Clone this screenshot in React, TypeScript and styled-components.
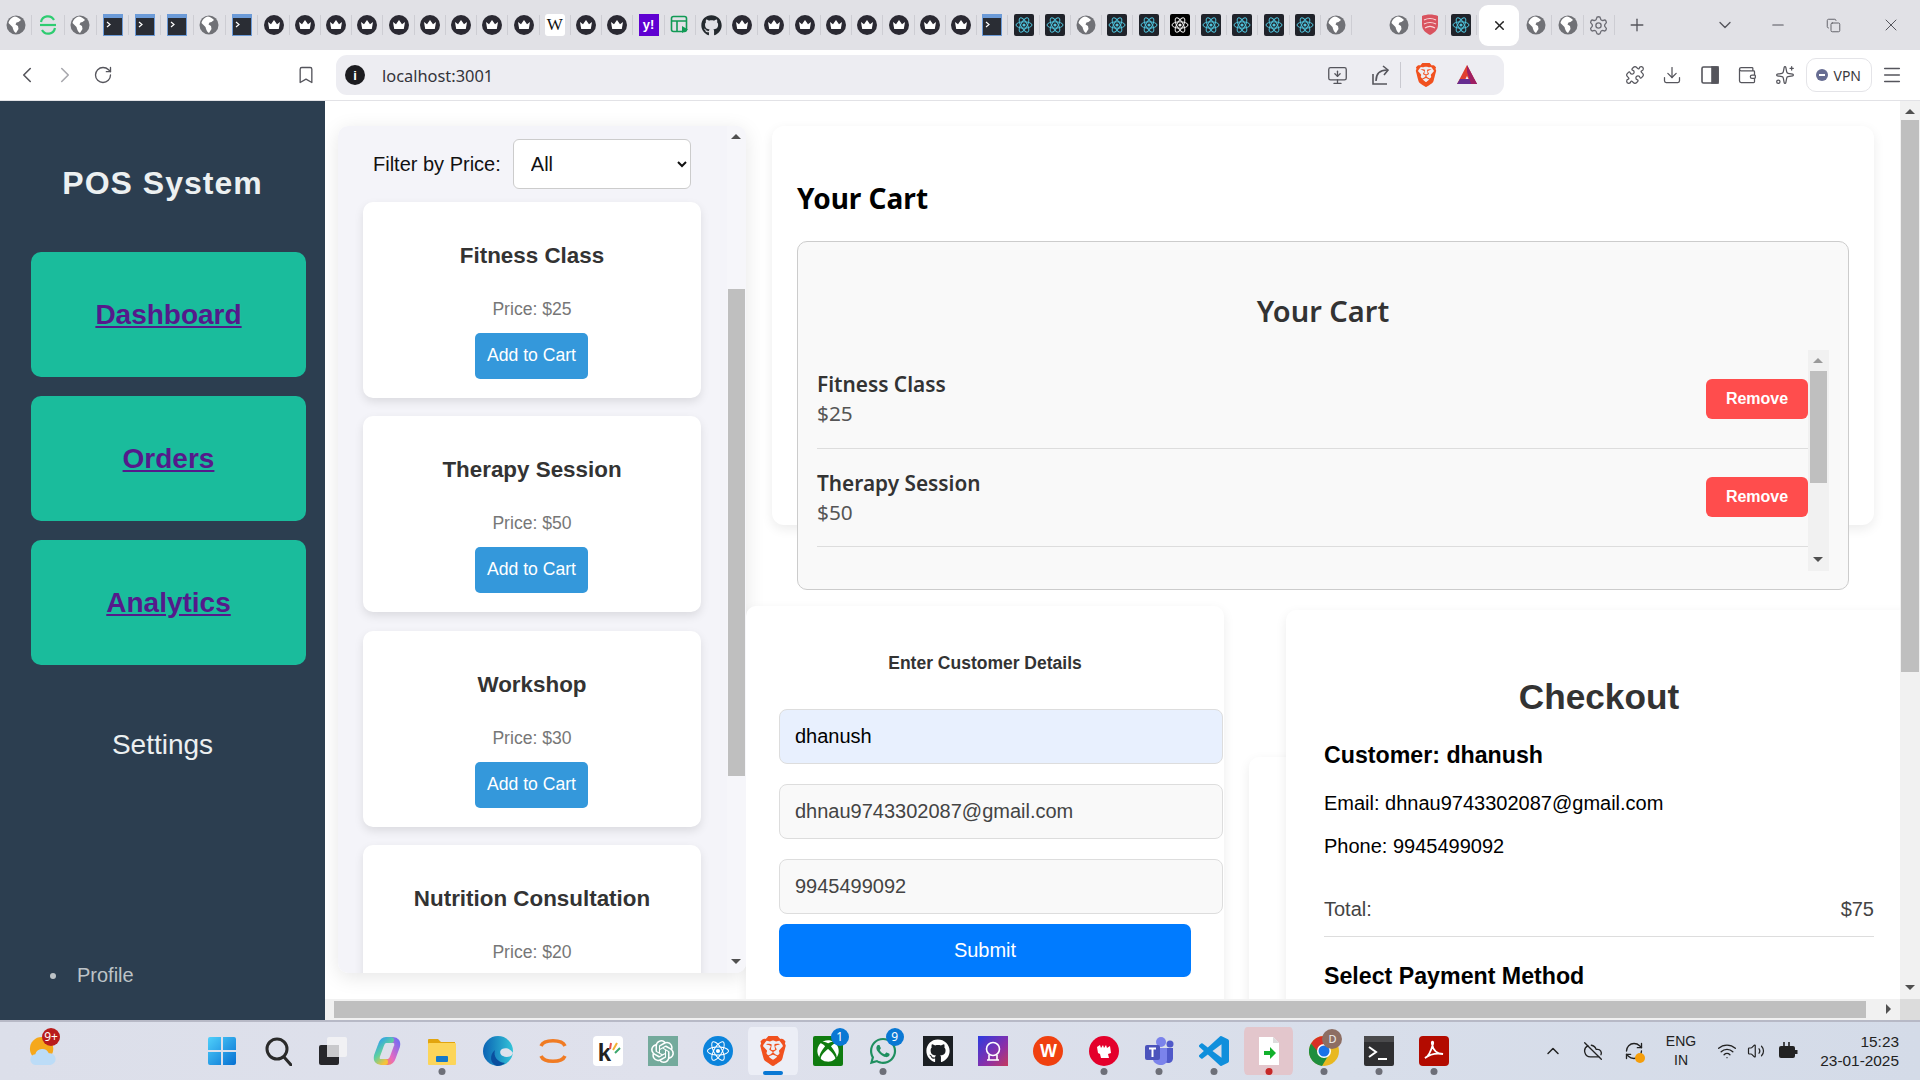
import React from "react";
import styled, { createGlobalStyle } from "styled-components";
import {
  Bookmark,
  ChevronDown,
  ChevronLeft,
  ChevronRight,
  ChevronUp,
  CloudOff,
  Copy,
  Download,
  Menu,
  Minus,
  MonitorDown,
  Plus,
  Puzzle,
  RefreshCw,
  RotateCw,
  Settings,
  Sparkles,
  Volume2,
  Wallet,
  Wifi,
  X,
} from "lucide-react";
import { FaGithub, FaWhatsapp, FaXbox } from "react-icons/fa";
import { SiBrave, SiOpenai, SiReact } from "react-icons/si";

const GlobalStyle = createGlobalStyle`
  html, body {
    margin: 0;
    padding: 0;
    overflow: hidden;
    background: #fff;
  }
  * {
    font-family: "Liberation Sans", Arial, sans-serif;
  }
`;

const Frame = styled.div`
  width: 1920px;
  height: 1080px;
  display: flex;
  flex-direction: column;
  overflow: hidden;
`;

/* ---------- browser tab strip ---------- */

const TabBar = styled.div`
  height: 50px;
  flex-shrink: 0;
  background: #e1e1e6;
  display: flex;
  align-items: center;
`;

const TabSlot = styled.div<{ $bare?: boolean; $wide?: boolean }>`
  width: ${(p) => (p.$wide ? 32.3 : 31.25)}px;
  height: 20px;
  flex-shrink: 0;
  display: flex;
  align-items: center;
  justify-content: center;
  box-sizing: border-box;
  border-right: 1px solid ${(p) => (p.$bare ? "transparent" : "#cdcdd3")};
`;

const ActiveTab = styled.div`
  width: 40px;
  height: 41px;
  margin: 0 2px 0 2px;
  flex-shrink: 0;
  background: #fff;
  border-radius: 9px;
  display: flex;
  align-items: center;
  justify-content: center;
  color: #222;
`;

const TabPlus = styled.div`
  width: 45px;
  flex-shrink: 0;
  display: flex;
  justify-content: center;
  color: #55555c;
`;

const WindowControls = styled.div`
  margin-left: 39px;
  flex-shrink: 0;
  display: flex;
  align-items: center;
  color: #55555c;
`;

const WindowButton = styled.div<{ $w: number }>`
  width: ${(p) => p.$w}px;
  display: flex;
  justify-content: center;
`;

/* ---------- browser toolbar ---------- */

const Toolbar = styled.div`
  height: 50px;
  flex-shrink: 0;
  background: #fff;
  border-bottom: 1px solid #e2e2e6;
  display: flex;
  align-items: center;
  padding-left: 8px;
  color: #55555c;
`;

const ToolSlot = styled.div<{ $w?: number; $dim?: boolean }>`
  width: ${(p) => p.$w ?? 38}px;
  flex-shrink: 0;
  display: flex;
  justify-content: center;
  align-items: center;
  color: ${(p) => (p.$dim ? "#a8a8ae" : "inherit")};
`;

const BookmarkSlot = styled(ToolSlot)`
  margin-left: 164px;
`;

const UrlBar = styled.div`
  width: 1168px;
  height: 40px;
  margin-left: 10px;
  flex-shrink: 0;
  background: #ededf2;
  border-radius: 11px;
  display: flex;
  align-items: center;
  padding-left: 9px;
  padding-right: 16px;
  box-sizing: border-box;
`;

const InfoDot = styled.div`
  width: 20px;
  height: 20px;
  border-radius: 50%;
  background: #1c1c20;
  color: #fff;
  font-size: 13px;
  font-weight: bold;
  display: flex;
  align-items: center;
  justify-content: center;
  flex-shrink: 0;
`;

const UrlText = styled.span`
  margin-left: 17px;
  font-family: "Noto Sans", sans-serif;
  font-size: 16.4px;
  color: #34343a;
`;

const UrlActions = styled.div`
  margin-left: auto;
  display: flex;
  align-items: center;
  color: #55555c;
`;

const UrlDivider = styled.div`
  width: 1px;
  height: 26px;
  background: #c9c9d0;
  margin: 0 5px 0 0;
`;

const RightTools = styled.div`
  display: flex;
  align-items: center;
  margin-left: 112px;
`;

const VpnPill = styled.div`
  width: 66px;
  height: 34px;
  margin-left: 2px;
  box-sizing: border-box;
  border: 1px solid #e4e4e8;
  border-radius: 10px;
  display: flex;
  align-items: center;
  padding-left: 9px;
  gap: 6px;
  font-family: "Noto Sans", sans-serif;
  font-size: 14px;
  color: #3a3a40;
`;

const VpnDot = styled.div`
  width: 12px;
  height: 12px;
  border-radius: 50%;
  background: #676d92;
  display: flex;
  align-items: center;
  justify-content: center;
  &::after {
    content: "";
    width: 6px;
    height: 2px;
    background: #fff;
  }
`;

/* ---------- page ---------- */

const Viewport = styled.div`
  flex: 1;
  min-height: 0;
  display: flex;
`;

const Sidebar = styled.aside`
  width: 325px;
  flex-shrink: 0;
  background: #2c3e50;
  color: #ecf0f1;
  display: flex;
  flex-direction: column;
  box-sizing: border-box;
`;

const Brand = styled.h2`
  margin: 64px 0 50px;
  font-size: 32px;
  line-height: 37px;
  font-weight: bold;
  letter-spacing: 1px;
  text-align: center;
  color: #ecf0f1;
`;

const NavList = styled.nav`
  display: flex;
  flex-direction: column;
  gap: 19px;
  padding-left: 31px;
`;

const NavCard = styled.a`
  width: 275px;
  height: 125px;
  background: #1abc9c;
  border-radius: 10px;
  display: flex;
  align-items: center;
  justify-content: center;
  font-size: 28px;
  font-weight: bold;
  color: #551a8b;
  text-decoration: underline;
`;

const PlainNav = styled.div`
  margin-top: 64px;
  font-size: 28px;
  line-height: 32px;
  text-align: center;
  color: #ecf0f1;
`;

const ProfileList = styled.ul`
  margin: auto 0 33px;
  padding-left: 50px;
  list-style: none;
  font-size: 20px;
  line-height: 23px;
  color: #bdc3c7;
`;

const ProfileItem = styled.li`
  display: flex;
  align-items: center;
  &::before {
    content: "";
    width: 6px;
    height: 6px;
    margin-right: 21px;
    border-radius: 50%;
    background: #bdc3c7;
  }
`;

const Workspace = styled.main`
  flex: 1;
  min-width: 0;
  position: relative;
  overflow: hidden;
  background: #fff;
`;

const ScrollPane = styled.div`
  height: 898px;
  overflow: hidden;
  display: flex;
  align-items: flex-start;
  padding: 25px 0 0 13px;
  box-sizing: border-box;
`;

/* scrollbars lie over the panes */
const Track = styled.div<{ $dir: "v" | "h" }>`
  position: absolute;
  background: #f1f1f1;
  ${(p) =>
    p.$dir === "v"
      ? "top: 0; right: 0; bottom: 0; width: 20px;"
      : "left: 0; right: 0; bottom: 0; height: 21px;"}
`;

const Thumb = styled.div<{ $a: number; $b: number; $dir: "v" | "h"; $edge: number }>`
  position: absolute;
  background: #bfbfbf;
  ${(p) =>
    p.$dir === "v"
      ? `top: ${p.$a}px; height: ${p.$b}px; left: ${p.$edge}px; right: ${p.$edge}px;`
      : `left: ${p.$a}px; width: ${p.$b}px; top: ${p.$edge}px; bottom: ${p.$edge}px;`}
`;

const Arrow = styled.div<{ $dir: "up" | "down" | "right"; $x: number; $y: number; $dim?: boolean }>`
  position: absolute;
  left: ${(p) => p.$x}px;
  top: ${(p) => p.$y}px;
  width: 0;
  height: 0;
  ${(p) => {
    const c = p.$dim ? "#9a9a9a" : "#505050";
    if (p.$dir === "up")
      return `border-left: 5px solid transparent; border-right: 5px solid transparent; border-bottom: 5px solid ${c};`;
    if (p.$dir === "down")
      return `border-left: 5px solid transparent; border-right: 5px solid transparent; border-top: 5px solid ${c};`;
    return `border-top: 5px solid transparent; border-bottom: 5px solid transparent; border-left: 5px solid ${c};`;
  }}
`;

const Corner = styled.div`
  position: absolute;
  right: 0;
  bottom: 0;
  width: 20px;
  height: 21px;
  background: #dcdcdc;
`;

/* ---------- product list ---------- */

const ProductPanel = styled.section`
  width: 408px;
  height: 847px;
  flex-shrink: 0;
  position: relative;
  overflow: hidden;
  background: #f4f4f9;
  border-radius: 10px;
  box-sizing: border-box;
  padding: 13px 0 0 25px;
`;

const ProductShadow = styled.div`
  flex-shrink: 0;
  border-radius: 10px;
  box-shadow: 0 4px 20px rgba(0, 0, 0, 0.1);
  height: 847px;
`;

const FilterRow = styled.div`
  display: flex;
  align-items: center;
  gap: 12px;
  padding-left: 10px;
  margin-bottom: 13px;
  font-size: 20px;
  color: #111;
`;

const FilterSelect = styled.select`
  width: 178px;
  height: 50px;
  padding: 0 13px;
  font-size: 20px;
  color: #111;
  background: #fff;
  border: 1px solid #ccc;
  border-radius: 6px;
`;

const ProductCard = styled.article`
  width: 338px;
  height: 196px;
  flex-shrink: 0;
  margin-bottom: 18.33px;
  padding: 41px 0 0;
  box-sizing: border-box;
  background: #fff;
  border-radius: 10px;
  box-shadow: 0 4px 10px rgba(0, 0, 0, 0.1);
  display: flex;
  flex-direction: column;
  align-items: center;
`;

const ProductName = styled.h3`
  margin: 0 0 30px;
  font-size: 22.4px;
  line-height: 26px;
  font-weight: bold;
  color: #333;
`;

const ProductPrice = styled.p`
  margin: 0 0 14px;
  font-size: 17.6px;
  line-height: 20px;
  color: #777;
`;

const AddButton = styled.button`
  width: 113px;
  height: 46px;
  margin-right: 1px;
  padding: 0 0 1px;
  border: none;
  border-radius: 5px;
  background: #3498db;
  color: #fff;
  font-size: 17.6px;
`;

const PanelScrollbar = styled.div`
  position: absolute;
  top: 0;
  right: 0;
  bottom: 0;
  width: 19px;
  background: #f6f6fa;
`;

/* ---------- cart ---------- */

const RightColumn = styled.div`
  display: flex;
  flex-direction: column;
  flex-shrink: 0;
`;

const CartPanel = styled.section`
  width: 1102px;
  height: 399px;
  margin-left: 26px;
  padding: 57px 25px 0;
  box-sizing: border-box;
  background: #fff;
  border-radius: 12px;
  box-shadow: 0 4px 12px rgba(0, 0, 0, 0.08);
`;

const CartHeading = styled.h2`
  margin: 0 0 28px;
  font-family: "Noto Sans", sans-serif;
  font-size: 28px;
  line-height: 30px;
  font-weight: 700;
  color: #000;
`;

const CartBox = styled.div`
  width: 1052px;
  height: 349px;
  box-sizing: border-box;
  padding: 0 19px 0 19px;
  background: #f9f9f9;
  border: 1px solid #ccc;
  border-radius: 10px;
  position: relative;
  z-index: 1;
`;

const CartBoxTitle = styled.h2`
  margin: 0;
  height: 108px;
  box-sizing: border-box;
  padding-top: 54px;
  text-align: center;
  font-family: "Noto Sans", sans-serif;
  font-size: 29px;
  line-height: 30px;
  font-weight: 600;
  color: #333;
`;

const CartList = styled.div`
  position: relative;
  height: 221px;
  padding-right: 21px;
`;

const CartRow = styled.div`
  height: 98.5px;
  box-sizing: border-box;
  border-bottom: 1px solid #ddd;
  display: flex;
  align-items: center;
  justify-content: space-between;
`;

const CartInfo = styled.div`
  display: flex;
  flex-direction: column;
  padding-top: 1px;
`;

const CartName = styled.span`
  font-family: "Noto Sans", sans-serif;
  font-size: 20.8px;
  line-height: 29px;
  font-weight: 600;
  color: #333;
`;

const CartPrice = styled.span`
  font-family: "Noto Sans", sans-serif;
  font-size: 20.8px;
  line-height: 29px;
  color: #555;
`;

const RemoveButton = styled.button`
  width: 102px;
  height: 40px;
  padding: 0;
  border: none;
  border-radius: 6px;
  background: #ff4d4d;
  color: #fff;
  font-size: 16px;
  font-weight: bold;
`;

const ListScrollbar = styled.div`
  position: absolute;
  top: 0;
  right: 0;
  width: 21px;
  height: 221px;
  background: #f1f1f1;
`;

/* ---------- form + checkout ---------- */

const LowerRow = styled.div`
  display: flex;
  align-items: flex-start;
  margin-top: 81px;
`;

const FormPanel = styled.section`
  width: 478px;
  height: 500px;
  flex-shrink: 0;
  padding: 47px 33px 0;
  box-sizing: border-box;
  background: #fff;
  border-radius: 10px;
  box-shadow: 0 4px 12px rgba(0, 0, 0, 0.08);
  display: flex;
  flex-direction: column;
`;

const FormTitle = styled.h4`
  margin: 0 0 36px;
  font-size: 17.5px;
  line-height: 20px;
  font-weight: bold;
  text-align: center;
  color: #333;
`;

const Field = styled.input<{ $filled?: boolean }>`
  width: 412px;
  height: 23px;
  flex-shrink: 0;
  box-sizing: content-box;
  padding: 15px;
  margin-bottom: 20px;
  border: 1px solid #ddd;
  border-radius: 8px;
  font-size: 20px;
  outline: none;
  color: ${(p) => (p.$filled ? "#000" : "#444")};
  background: ${(p) => (p.$filled ? "#e8f0fe" : "#f9f9f9")};
  &:last-of-type {
    margin-bottom: 10px;
  }
`;

const SubmitButton = styled.button`
  width: 412px;
  height: 53px;
  flex-shrink: 0;
  border: none;
  border-radius: 7px;
  background: #007bff;
  color: #fff;
  font-size: 20px;
`;

const BackPanel = styled.div`
  width: 120px;
  height: 300px;
  flex-shrink: 0;
  margin: 151px -83px 0 25px;
  background: #fff;
  border-radius: 10px;
  box-shadow: 0 4px 12px rgba(0, 0, 0, 0.08);
`;

const CheckoutPanel = styled.section`
  position: relative;
  width: 626px;
  height: 500px;
  flex-shrink: 0;
  margin-top: 4px;
  padding: 67px 38px 0;
  box-sizing: border-box;
  background: #fff;
  border-radius: 10px;
  box-shadow: 0 4px 12px rgba(0, 0, 0, 0.08);
`;

const CheckoutTitle = styled.h2`
  margin: 0 0 25px;
  font-size: 35.2px;
  line-height: 40px;
  font-weight: bold;
  text-align: center;
  color: #333;
`;

const CheckoutHeading = styled.h3`
  margin: 0;
  font-size: 23.2px;
  line-height: 27px;
  font-weight: bold;
  color: #000;
`;

const CheckoutLine = styled.p`
  margin: 20px 0 0;
  font-size: 20px;
  line-height: 23px;
  color: #000;
  &:first-of-type {
    margin-top: 23px;
  }
`;

const TotalRow = styled.div`
  width: 550px;
  margin-top: 40px;
  padding-bottom: 15px;
  margin-bottom: 26px;
  border-bottom: 1px solid #ddd;
  display: flex;
  justify-content: space-between;
  font-size: 20px;
  line-height: 23px;
  color: #444;
`;

/* ---------- windows taskbar ---------- */

const Taskbar = styled.footer`
  height: 60px;
  flex-shrink: 0;
  box-sizing: border-box;
  border-top: 2px solid #b7b9c6;
  background: linear-gradient(90deg, #dcdfea, #dfe1ec 35%, #d8deea 70%, #d4dbe8);
  display: flex;
  align-items: center;
`;

const TaskSlot = styled.div<{ $w?: number; $dot?: string; $bar?: boolean; $hl?: string }>`
  position: relative;
  width: ${(p) => p.$w ?? 55.1}px;
  height: 48px;
  flex-shrink: 0;
  display: flex;
  align-items: center;
  justify-content: center;
  box-sizing: border-box;
  padding: 0 ${(p) => (p.$hl ? 3 : 0)}px;
  background: ${(p) => p.$hl ?? "transparent"};
  background-clip: content-box;
  border-radius: 6px;
  &::after {
    content: "";
    display: ${(p) => (p.$dot || p.$bar ? "block" : "none")};
    position: absolute;
    bottom: 0px;
    left: 50%;
    transform: translateX(-50%);
    width: ${(p) => (p.$bar ? 20 : 7)}px;
    height: ${(p) => (p.$bar ? 4 : 7)}px;
    border-radius: 4px;
    background: ${(p) => (p.$bar ? "#0a78d4" : p.$dot)};
  }
`;

const TaskGroup = styled.div`
  display: flex;
  align-items: center;
  margin-left: 110.5px;
`;

const TaskBadge = styled.span<{ $bg: string; $right?: number }>`
  position: absolute;
  top: 1px;
  right: ${(p) => p.$right ?? 7}px;
  min-width: 18px;
  height: 18px;
  padding: 0 2px;
  box-sizing: border-box;
  border-radius: 9px;
  background: ${(p) => p.$bg};
  color: #fff;
  font-family: "Noto Sans", sans-serif;
  font-size: 12px;
  line-height: 18px;
  text-align: center;
`;

const SyncDot = styled.span`
  position: absolute;
  right: 10px;
  bottom: 12px;
  width: 10px;
  height: 10px;
  border-radius: 50%;
  background: #f59e0b;
`;

const Tray = styled.div`
  margin-left: auto;
  padding-right: 21px;
  display: flex;
  align-items: center;
  color: #222;
`;

const TrayText = styled.div<{ $w: number; $align: string; $size: number }>`
  width: ${(p) => p.$w}px;
  flex-shrink: 0;
  display: flex;
  flex-direction: column;
  align-items: ${(p) => p.$align};
  font-family: "Noto Sans", sans-serif;
  font-size: ${(p) => p.$size}px;
  line-height: 19px;
  color: #222;
`;

/* ---------- small drawings ---------- */

const Globe = () => (
  <svg width="20" height="20" viewBox="0 0 20 20">
    <circle cx="10" cy="10" r="9.5" fill="#707176" />
    <path
      d="M9 1.5c2.5.5 5 2 6 3.5l-2.5 2-2 .5-1 2 2.5 1.5.5 3-2.5 4C8 17 7 14 6.5 12L4 9.5 2.5 8C3 5 6 2 9 1.5z"
      fill="#fff"
    />
  </svg>
);

const Crown = () => (
  <svg width="20" height="20" viewBox="0 0 20 20">
    <circle cx="10" cy="10" r="10" fill="#2a2932" />
    <path d="M4 7l3 2.2L10 5l3 4.2L16 7l-1.2 7H5.2z" fill="#fff" />
  </svg>
);

const TermThumb = () => (
  <svg width="20" height="22" viewBox="0 0 20 22">
    <rect width="20" height="22" fill="#6c9bd8" />
    <rect x="1" y="4" width="18" height="17" fill="#2a2d34" />
    <path d="M4 8l3 2.5L4 13" stroke="#fff" strokeWidth="1.2" fill="none" />
  </svg>
);

const ReactThumb = ({ dark }: { dark?: boolean }) => (
  <svg width="20" height="22" viewBox="0 0 20 22">
    <rect width="20" height="22" rx="2" fill={dark ? "#000" : "#20232a"} />
    <g fill="none" stroke={dark ? "#eee" : "#4fc3dc"} strokeWidth="1">
      <ellipse cx="10" cy="11" rx="8" ry="3.2" />
      <ellipse cx="10" cy="11" rx="8" ry="3.2" transform="rotate(60 10 11)" />
      <ellipse cx="10" cy="11" rx="8" ry="3.2" transform="rotate(120 10 11)" />
    </g>
    <circle cx="10" cy="11" r="1.6" fill={dark ? "#eee" : "#4fc3dc"} />
  </svg>
);

const WikiLetter = styled.div`
  width: 20px;
  height: 22px;
  background: #fff;
  border-radius: 3px;
  text-align: center;
  font-family: "Liberation Serif", serif;
  font-size: 17px;
  line-height: 22px;
  color: #111;
`;

const YahooTile = styled.div`
  width: 20px;
  height: 22px;
  background: #5f01d1;
  text-align: center;
  font-size: 13px;
  font-weight: bold;
  line-height: 22px;
  color: #fff;
`;

const Sheet = () => (
  <svg width="20" height="20" viewBox="0 0 20 20" fill="none" stroke="#119a55" strokeWidth="1.6">
    <rect x="1.5" y="1.5" width="15" height="15" rx="2" />
    <path d="M1.5 6h15M7 6v10.5" />
    <path d="M12 11l6 3.5-6 3.5z" fill="#119a55" stroke="none" />
  </svg>
);

const ShieldThumb = () => (
  <svg width="20" height="22" viewBox="0 0 20 22">
    <path d="M2 2c5-2 11-2 16 0v9c0 5-4 8-8 10-4-2-8-5-8-10z" fill="#d9535f" />
    <path d="M4 6c4-2 8-2 12 0M4 10c4-2 8-2 12 0M5 14c3-2 7-2 10 0" stroke="#f7d7d9" strokeWidth="1.2" fill="none" />
  </svg>
);

const BatLogo = () => (
  <svg width="22" height="22" viewBox="0 0 22 22">
    <path d="M11 1L1 20h6l4-8 4 8h6z" fill="#e0402f" />
    <path d="M1 20h20l-3-5H4z" fill="#662d91" />
    <path d="M11 1l10 19h-6L11 8z" fill="#9e1f63" />
  </svg>
);

const ShareIcon = () => (
  <svg width="22" height="22" viewBox="0 0 22 22" fill="none" stroke="#55555c" strokeWidth="1.6">
    <path d="M3 10v10h14" />
    <path d="M6 17c0-7 4-11 11-11" />
    <path d="M13 2l5 4-4 5" />
  </svg>
);

const SidePanelIcon = () => (
  <svg width="20" height="20" viewBox="0 0 20 20" fill="none" stroke="#55555c" strokeWidth="1.6">
    <rect x="2" y="2" width="16" height="16" rx="1.5" />
    <rect x="12" y="2" width="6" height="16" fill="#55555c" />
  </svg>
);

const WindowsLogo = () => (
  <svg width="30" height="30" viewBox="0 0 30 30">
    <defs>
      <linearGradient id="winG" x1="0" y1="0" x2="1" y2="1">
        <stop offset="0" stopColor="#4fd0fb" />
        <stop offset="1" stopColor="#0670d2" />
      </linearGradient>
    </defs>
    <path d="M1 3a2 2 0 012-2h11v13H1zM16 1h11a2 2 0 012 2v11H16zM1 16h13v13H3a2 2 0 01-2-2zM16 16h13v11a2 2 0 01-2 2H16z" fill="url(#winG)" />
  </svg>
);

const SearchGlass = () => (
  <svg width="30" height="30" viewBox="0 0 30 30" fill="none" stroke="#2a2a2a" strokeWidth="3">
    <circle cx="15" cy="13" r="10" />
    <path d="M22 21l7 8" strokeLinecap="round" />
  </svg>
);

const TaskView = () => (
  <svg width="30" height="30" viewBox="0 0 30 30">
    <rect x="10" y="1" width="20" height="20" rx="2" fill="#f1f1f4" />
    <rect x="2" y="9" width="20" height="20" rx="2" fill="#26262a" />
    <rect x="10" y="9" width="12" height="12" fill="#c9c9cc" />
  </svg>
);

const Copilot = () => (
  <svg width="30" height="30" viewBox="0 0 30 30" fill="none" strokeWidth="6" strokeLinecap="round">
    <defs>
      <linearGradient id="copA" x1="0" y1="0" x2="0.6" y2="1">
        <stop offset="0" stopColor="#2b9cf2" />
        <stop offset="0.55" stopColor="#5fd0a0" />
        <stop offset="1" stopColor="#f5c33b" />
      </linearGradient>
      <linearGradient id="copB" x1="1" y1="0" x2="0" y2="1">
        <stop offset="0" stopColor="#7b6cf0" />
        <stop offset="0.6" stopColor="#e86ac0" />
        <stop offset="1" stopColor="#f58a4b" />
      </linearGradient>
    </defs>
    <path d="M11 26H16C19 26 20 24 21 21L25 10C26 6 24 4 21 4H17" stroke="url(#copB)" />
    <path d="M19 4H14C11 4 10 6 9 9L5 20C4 24 6 26 9 26H13" stroke="url(#copA)" />
  </svg>
);

const Explorer = () => (
  <svg width="30" height="30" viewBox="0 0 30 30">
    <path d="M1 4a1 1 0 011-1h9l3 3h14v6H1z" fill="#e2a50f" />
    <rect x="1" y="7" width="28" height="22" rx="1" fill="#fcd55a" />
    <rect x="9" y="20" width="12" height="6" rx="1" fill="#1478c9" />
  </svg>
);

const Edge = () => (
  <svg width="30" height="30" viewBox="0 0 30 30">
    <defs>
      <linearGradient id="edgeG" x1="0" y1="0" x2="1" y2="0">
        <stop offset="0" stopColor="#0b63b4" />
        <stop offset="1" stopColor="#33c4d8" />
      </linearGradient>
    </defs>
    <circle cx="15" cy="15" r="15" fill="url(#edgeG)" />
    <path d="M30 17c-1 4-7 5-10 3-3-1-4-5-1-7 4-2 9 0 11 4z" fill="#dfe2ec" />
    <path d="M14 30C7 28 6 19 12 14c-2 6 2 12 10 13-2 2-5 3-8 3z" fill="#0a4f9e" />
  </svg>
);

const OrangeRing = () => (
  <svg width="30" height="30" viewBox="0 0 30 30" fill="none" stroke="#f07b23" strokeWidth="3.5">
    <path d="M3 10C6 3 24 3 27 10" />
    <path d="M3 20c3 7 21 7 24 0" />
  </svg>
);

const KiteTile = styled.div`
  width: 30px;
  height: 30px;
  border-radius: 4px;
  background: #fff;
  position: relative;
  text-align: left;
  padding-left: 5px;
  box-sizing: border-box;
  font-family: "Liberation Sans", sans-serif;
  font-size: 24px;
  font-weight: bold;
  line-height: 34px;
  color: #222;
`;

const KiteRays = () => (
  <svg width="30" height="30" viewBox="0 0 30 30">
    <path d="M17 13l1-6" stroke="#e5534b" strokeWidth="2" />
    <path d="M20 14l4-7" stroke="#f2b233" strokeWidth="2" />
    <path d="M22 17l5-5" stroke="#3aa76d" strokeWidth="2" />
  </svg>
);

const KiteOverlay = styled.div`
  position: absolute;
  inset: 0;
`;

const IconTile = styled.div<{ $bg: string; $round?: boolean; $r?: number; $fg?: string }>`
  width: 30px;
  height: 30px;
  border-radius: ${(p) => (p.$round ? "50%" : `${p.$r ?? 0}px`)};
  background: ${(p) => p.$bg};
  color: ${(p) => p.$fg ?? "#fff"};
  display: flex;
  align-items: center;
  justify-content: center;
  font-size: 18px;
  font-weight: bold;
`;

const TeamsLogo = () => (
  <svg width="30" height="30" viewBox="0 0 30 30">
    <circle cx="17" cy="6" r="5" fill="#7b83eb" />
    <circle cx="26" cy="8" r="3.5" fill="#5059c9" />
    <path d="M20 12h9v10c0 3-2 5-5 5-2 0-4-1-4-3z" fill="#5059c9" />
    <path d="M9 12h14v12c0 3-3 5-6 5s-8-2-8-6z" fill="#7b83eb" />
    <rect x="1" y="9" width="15" height="15" rx="2" fill="#4b53bc" />
    <path d="M5 12.5h7M8.5 12.5V21" stroke="#fff" strokeWidth="2" />
  </svg>
);

const VsCode = () => (
  <svg width="30" height="30" viewBox="0 0 24 24">
    <path
      d="M23.15 2.587L18.21.21a1.494 1.494 0 0 0-1.705.29l-9.46 8.63-4.12-3.128a.999.999 0 0 0-1.276.057L.327 7.261A1 1 0 0 0 .326 8.74L3.899 12 .326 15.26a1 1 0 0 0 .001 1.479L1.65 17.94a.999.999 0 0 0 1.276.057l4.12-3.128 9.46 8.63a1.492 1.492 0 0 0 1.704.29l4.942-2.377A1.5 1.5 0 0 0 24 20.06V3.939a1.5 1.5 0 0 0-.85-1.352zm-5.146 14.861L10.826 12l7.178-5.448v10.896z"
      fill="#0f8fdc"
    />
  </svg>
);

const NotesFile = () => (
  <svg width="24" height="30" viewBox="0 0 24 30">
    <path d="M2 1h14l6 6v22H2z" fill="#fff" />
    <path d="M16 1l6 6h-6z" fill="#dcdcdc" />
    <path d="M7 15h6v-4l6 6-6 6v-4H7z" fill="#12b12c" />
  </svg>
);

const ChromeLogo = () => (
  <svg width="30" height="30" viewBox="0 0 30 30">
    <circle cx="15" cy="15" r="15" fill="#e8b820" />
    <path d="M15 0A15 15 0 002 7.5L8 18 15 9h13A15 15 0 0015 0z" fill="#d93025" />
    <path d="M2 7.5A15 15 0 0013 30l6-10-9-3z" fill="#1e8e3e" />
    <circle cx="15" cy="15" r="7" fill="#fff" />
    <circle cx="15" cy="15" r="5.5" fill="#1a73e8" />
  </svg>
);

const ProfileChip = styled.span`
  position: absolute;
  top: 2px;
  right: 9px;
  width: 20px;
  height: 20px;
  border-radius: 50%;
  background: #8d6e63;
  color: #eee;
  font-family: "Noto Sans", sans-serif;
  font-size: 11px;
  line-height: 20px;
  text-align: center;
`;

const TerminalTile = () => (
  <svg width="30" height="30" viewBox="0 0 30 30">
    <rect width="30" height="30" rx="2" fill="#2f2f31" />
    <rect width="30" height="6" fill="#4a4a4c" />
    <path d="M5 11l7 5-7 5" stroke="#fff" strokeWidth="2" fill="none" />
    <path d="M14 23h9" stroke="#fff" strokeWidth="2" />
  </svg>
);

const AcrobatGlyph = () => (
  <svg width="22" height="22" viewBox="0 0 22 22" fill="none" stroke="#fff" strokeWidth="1.8">
    <path d="M2 18c3-1 6-7 8-14 1-3-2-3-1 0 1 6 5 10 11 10-6-1-13 0-18 4z" />
  </svg>
);

const FistGlyph = () => (
  <svg width="18" height="18" viewBox="0 0 18 18" fill="#fff">
    <path d="M2 5l3-2 1 3 2-3 1 3 2-3 1 3 3-2 1 7-3 1 1 4H6l-1-4-2-1z" />
  </svg>
);

const ArchGlyph = () => (
  <svg width="22" height="22" viewBox="0 0 22 22" fill="none" stroke="#fff" strokeWidth="1.6">
    <circle cx="11" cy="9" r="6.5" />
    <path d="M7 20v-5M15 20v-5M5 20h12" />
  </svg>
);

const WeatherIcon = () => (
  <svg width="27" height="28" viewBox="0 0 30 31">
    <circle cx="14" cy="13" r="13" fill="#f5a81c" />
    <path d="M8 31a6 6 0 01-1-12 8 8 0 0115-1 6.5 6.5 0 012 13z" fill="#bcdcf7" />
  </svg>
);

const BatteryGlyph = () => (
  <svg width="22" height="20" viewBox="0 0 22 20">
    <rect x="2" y="5" width="16" height="12" rx="2" fill="#222" />
    <rect x="18" y="9" width="2.5" height="4" fill="#222" />
    <path d="M7 1v4M12 1v4" stroke="#222" strokeWidth="1.6" />
  </svg>
);

type TabKind = "globe" | "green" | "term" | "crown" | "wiki" | "yahoo" | "sheet" | "github" | "react" | "spider" | "blank" | "shield";

const repeat = (k: TabKind, n: number): TabKind[] => Array(n).fill(k);

const tabs: TabKind[] = [
  "globe",
  "green",
  "globe",
  ...repeat("term", 3),
  "globe",
  "term",
  ...repeat("crown", 9),
  "wiki",
  ...repeat("crown", 2),
  "yahoo",
  "sheet",
  "github",
  ...repeat("crown", 8),
  "term",
  ...repeat("react", 2),
  "globe",
  ...repeat("react", 2),
  "spider",
  ...repeat("react", 4),
  "globe",
  "blank",
  "globe",
  "shield",
  "react",
];

const TabFavicon = ({ kind }: { kind: TabKind }) => {
  switch (kind) {
    case "globe":
      return <Globe />;
    case "crown":
      return <Crown />;
    case "term":
      return <TermThumb />;
    case "react":
      return <ReactThumb />;
    case "spider":
      return <ReactThumb dark />;
    case "wiki":
      return <WikiLetter>W</WikiLetter>;
    case "yahoo":
      return <YahooTile>y!</YahooTile>;
    case "sheet":
      return <Sheet />;
    case "github":
      return <FaGithub size={21} color="#24292e" />;
    case "shield":
      return <ShieldThumb />;
    case "green":
      return (
        <svg width="20" height="20" viewBox="0 0 20 20" fill="none" stroke="#2ecc71" strokeWidth="2.2">
          <path d="M3 7a7 7 0 0113-2M17 13a7 7 0 01-13 2" />
          <path d="M2 10h16" />
        </svg>
      );
    default:
      return null;
  }
};

// the last card runs past the bottom of the list, so its button never shows
const products = [
  { name: "Fitness Class", price: 25, button: true },
  { name: "Therapy Session", price: 50, button: true },
  { name: "Workshop", price: 30, button: true },
  { name: "Nutrition Consultation", price: 20, button: false },
];

const cartItems = [
  { name: "Fitness Class", price: 25 },
  { name: "Therapy Session", price: 50 },
];

export default function App() {
  return (
    <Frame>
      <GlobalStyle />
      <TabBar>
        {tabs.map((t, i) => (
          <TabSlot key={i} $bare={t === "blank"} $wide={i < 8}>
            <TabFavicon kind={t} />
          </TabSlot>
        ))}
        <ActiveTab>
          <X size={15} strokeWidth={2.4} />
        </ActiveTab>
        <TabSlot>
          <Globe />
        </TabSlot>
        <TabSlot>
          <Globe />
        </TabSlot>
        <TabSlot>
          <Settings size={21} color="#6c6c74" strokeWidth={1.5} />
        </TabSlot>
        <TabPlus>
          <Plus size={20} strokeWidth={1.6} />
        </TabPlus>
        <WindowControls>
          <WindowButton $w={53}>
            <ChevronDown size={20} strokeWidth={1.6} />
          </WindowButton>
          <WindowButton $w={53}>
            <Minus size={18} strokeWidth={1.4} />
          </WindowButton>
          <WindowButton $w={58}>
            <Copy size={15} strokeWidth={1.4} />
          </WindowButton>
          <WindowButton $w={57}>
            <X size={20} strokeWidth={1.2} />
          </WindowButton>
        </WindowControls>
      </TabBar>

      <Toolbar>
        <ToolSlot>
          <ChevronLeft size={26} strokeWidth={1.5} />
        </ToolSlot>
        <ToolSlot $dim>
          <ChevronRight size={26} strokeWidth={1.5} />
        </ToolSlot>
        <ToolSlot>
          <RotateCw size={20} strokeWidth={1.6} />
        </ToolSlot>
        <BookmarkSlot $w={40}>
          <Bookmark size={20} strokeWidth={1.6} />
        </BookmarkSlot>
        <UrlBar>
          <InfoDot>i</InfoDot>
          <UrlText>localhost:3001</UrlText>
          <UrlActions>
            <ToolSlot $w={50}>
              <MonitorDown size={21} strokeWidth={1.5} />
            </ToolSlot>
            <ToolSlot $w={38}>
              <ShareIcon />
            </ToolSlot>
            <UrlDivider />
            <ToolSlot $w={40}>
              <SiBrave size={24} color="#f1511f" />
            </ToolSlot>
            <ToolSlot $w={42}>
              <BatLogo />
            </ToolSlot>
          </UrlActions>
        </UrlBar>
        <RightTools>
          <ToolSlot $w={37.5}>
            <Puzzle size={20} strokeWidth={1.5} />
          </ToolSlot>
          <ToolSlot $w={37.5}>
            <Download size={20} strokeWidth={1.5} />
          </ToolSlot>
          <ToolSlot $w={37.5}>
            <SidePanelIcon />
          </ToolSlot>
          <ToolSlot $w={37.5}>
            <Wallet size={20} strokeWidth={1.5} />
          </ToolSlot>
          <ToolSlot $w={37.5}>
            <Sparkles size={20} strokeWidth={1.5} />
          </ToolSlot>
          <VpnPill>
            <VpnDot />
            VPN
          </VpnPill>
          <ToolSlot $w={40}>
            <Menu size={22} strokeWidth={1.6} />
          </ToolSlot>
        </RightTools>
      </Toolbar>

      <Viewport>
        <Sidebar>
          <Brand>POS System</Brand>
          <NavList>
            <NavCard href="#">Dashboard</NavCard>
            <NavCard href="#">Orders</NavCard>
            <NavCard href="#">Analytics</NavCard>
          </NavList>
          <PlainNav>Settings</PlainNav>
          <ProfileList>
            <ProfileItem>Profile</ProfileItem>
          </ProfileList>
        </Sidebar>

        <Workspace>
          <ScrollPane>
            <ProductShadow>
              <ProductPanel>
                <FilterRow>
                  <label>Filter by Price:</label>
                  <FilterSelect defaultValue="All">
                    <option>All</option>
                  </FilterSelect>
                </FilterRow>
                {products.map((p) => (
                  <ProductCard key={p.name}>
                    <ProductName>{p.name}</ProductName>
                    <ProductPrice>Price: ${p.price}</ProductPrice>
                    {p.button && <AddButton>Add to Cart</AddButton>}
                  </ProductCard>
                ))}
                <PanelScrollbar>
                  <Arrow $dir="up" $x={4} $y={8} />
                  <Thumb $dir="v" $a={163} $b={487} $edge={1} />
                  <Arrow $dir="down" $x={4} $y={833} />
                </PanelScrollbar>
              </ProductPanel>
            </ProductShadow>

            <RightColumn>
              <CartPanel>
                <CartHeading>Your Cart</CartHeading>
                <CartBox>
                  <CartBoxTitle>Your Cart</CartBoxTitle>
                  <CartList>
                    {cartItems.map((c) => (
                      <CartRow key={c.name}>
                        <CartInfo>
                          <CartName>{c.name}</CartName>
                          <CartPrice>${c.price}</CartPrice>
                        </CartInfo>
                        <RemoveButton>Remove</RemoveButton>
                      </CartRow>
                    ))}
                    <ListScrollbar>
                      <Arrow $dir="up" $x={5} $y={8} $dim />
                      <Thumb $dir="v" $a={21} $b={112} $edge={2} />
                      <Arrow $dir="down" $x={5} $y={207} />
                    </ListScrollbar>
                  </CartList>
                </CartBox>
              </CartPanel>

              <LowerRow>
                <FormPanel>
                  <FormTitle>Enter Customer Details</FormTitle>
                  <Field $filled readOnly value="dhanush" />
                  <Field readOnly value="dhnau9743302087@gmail.com" />
                  <Field readOnly value="9945499092" />
                  <SubmitButton>Submit</SubmitButton>
                </FormPanel>
                <BackPanel />
                <CheckoutPanel>
                  <CheckoutTitle>Checkout</CheckoutTitle>
                  <CheckoutHeading>Customer: dhanush</CheckoutHeading>
                  <CheckoutLine>Email: dhnau9743302087@gmail.com</CheckoutLine>
                  <CheckoutLine>Phone: 9945499092</CheckoutLine>
                  <TotalRow>
                    <span>Total:</span>
                    <span>$75</span>
                  </TotalRow>
                  <CheckoutHeading>Select Payment Method</CheckoutHeading>
                </CheckoutPanel>
              </LowerRow>
            </RightColumn>
          </ScrollPane>

          <Track $dir="v">
            <Arrow $dir="up" $x={5} $y={8} />
            <Thumb $dir="v" $a={19} $b={552} $edge={1} />
            <Arrow $dir="down" $x={5} $y={884} />
          </Track>
          <Track $dir="h">
            <Thumb $dir="h" $a={9} $b={1532} $edge={2} />
            <Arrow $dir="right" $x={1561} $y={5} />
            <Corner />
          </Track>
        </Workspace>
      </Viewport>

      <Taskbar>
        <TaskSlot $w={84}>
          <WeatherIcon />
          <TaskBadge $bg="#b91c1c" $right={24}>
            9+
          </TaskBadge>
        </TaskSlot>
        <TaskGroup>
          <TaskSlot>
            <WindowsLogo />
          </TaskSlot>
          <TaskSlot>
            <SearchGlass />
          </TaskSlot>
          <TaskSlot>
            <TaskView />
          </TaskSlot>
          <TaskSlot>
            <Copilot />
          </TaskSlot>
          <TaskSlot $dot="#6d6f78">
            <Explorer />
          </TaskSlot>
          <TaskSlot>
            <Edge />
          </TaskSlot>
          <TaskSlot>
            <OrangeRing />
          </TaskSlot>
          <TaskSlot>
            <KiteTile>
              k
              <KiteOverlay>
                <KiteRays />
              </KiteOverlay>
            </KiteTile>
          </TaskSlot>
          <TaskSlot>
            <IconTile $bg="#74aa9c">
              <SiOpenai size={23} />
            </IconTile>
          </TaskSlot>
          <TaskSlot>
            <IconTile $bg="#0b84dc" $round>
              <SiReact size={22} />
            </IconTile>
          </TaskSlot>
          <TaskSlot $bar $hl="#eceef6">
            <SiBrave size={30} color="#f1511f" />
          </TaskSlot>
          <TaskSlot>
            <IconTile $bg="#107c10" $r={2}>
              <FaXbox size={22} />
            </IconTile>
            <TaskBadge $bg="#0a78d4">1</TaskBadge>
          </TaskSlot>
          <TaskSlot $dot="#6d6f78">
            <FaWhatsapp size={30} color="#1f8f5f" />
            <TaskBadge $bg="#0a78d4">9</TaskBadge>
          </TaskSlot>
          <TaskSlot>
            <IconTile $bg="#1b1f23">
              <FaGithub size={24} />
            </IconTile>
          </TaskSlot>
          <TaskSlot>
            <IconTile $bg="linear-gradient(135deg, #2b3be0, #8b2fa8 60%, #c43a5d)">
              <ArchGlyph />
            </IconTile>
          </TaskSlot>
          <TaskSlot>
            <IconTile $bg="#f0400f" $round>
              W
            </IconTile>
          </TaskSlot>
          <TaskSlot $dot="#6d6f78">
            <IconTile $bg="#e4002b" $round>
              <FistGlyph />
            </IconTile>
          </TaskSlot>
          <TaskSlot $dot="#6d6f78">
            <TeamsLogo />
          </TaskSlot>
          <TaskSlot $dot="#6d6f78">
            <VsCode />
          </TaskSlot>
          <TaskSlot $dot="#c62828" $hl="#e3c6cc">
            <NotesFile />
          </TaskSlot>
          <TaskSlot $dot="#6d6f78">
            <ChromeLogo />
            <ProfileChip>D</ProfileChip>
          </TaskSlot>
          <TaskSlot $dot="#6d6f78">
            <TerminalTile />
          </TaskSlot>
          <TaskSlot $dot="#6d6f78">
            <IconTile $bg="#b30b00" $r={4}>
              <AcrobatGlyph />
            </IconTile>
          </TaskSlot>
        </TaskGroup>
        <Tray>
          <TaskSlot $w={40}>
            <ChevronUp size={20} strokeWidth={1.8} />
          </TaskSlot>
          <TaskSlot $w={40}>
            <CloudOff size={20} strokeWidth={1.6} />
          </TaskSlot>
          <TaskSlot $w={42}>
            <RefreshCw size={20} strokeWidth={1.6} />
            <SyncDot />
          </TaskSlot>
          <TrayText $w={52} $align="center" $size={14}>
            <span>ENG</span>
            <span>IN</span>
          </TrayText>
          <TaskSlot $w={40}>
            <Wifi size={20} strokeWidth={1.6} />
          </TaskSlot>
          <TaskSlot $w={18}>
            <Volume2 size={18} strokeWidth={1.6} />
          </TaskSlot>
          <TaskSlot $w={46}>
            <BatteryGlyph />
          </TaskSlot>
          <TrayText $w={88} $align="flex-end" $size={15.4}>
            <span>15:23</span>
            <span>23-01-2025</span>
          </TrayText>
        </Tray>
      </Taskbar>
    </Frame>
  );
}
